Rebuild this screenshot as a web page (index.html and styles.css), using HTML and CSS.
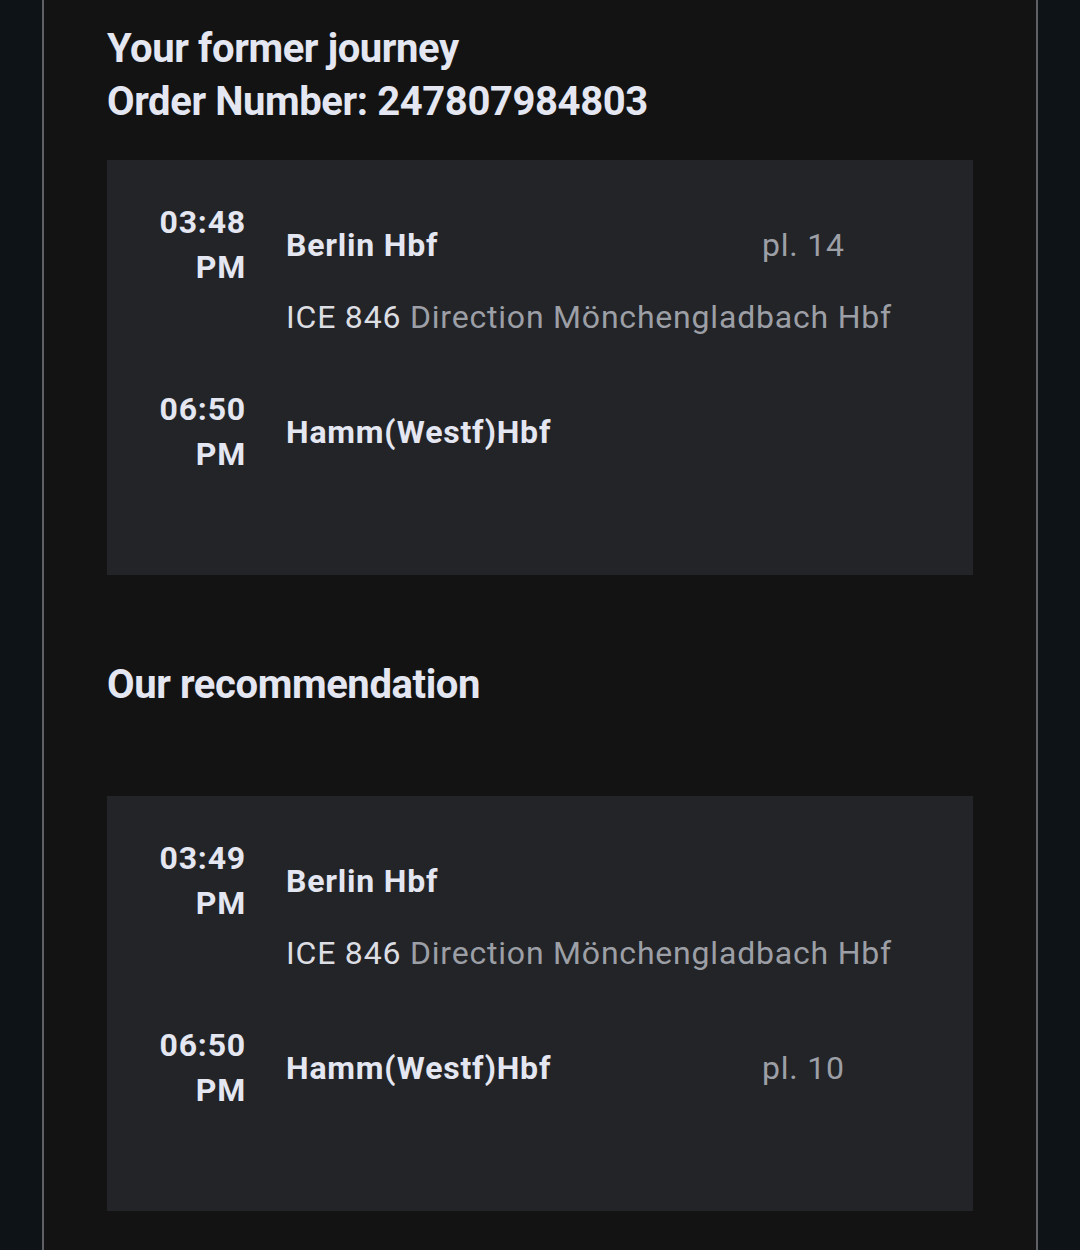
FILE: index.html
```html
<!DOCTYPE html>
<html lang="en">

<head>
    <meta charset="UTF-8">
    <meta name="viewport" content="width=device-width, initial-scale=1.0">
    <title>Journey</title>
    <link rel="stylesheet" href="styles.css">
</head>

<body>
    <div class="panel">
        <h1 class="heading">Your former journey<br>Order Number: 247807984803</h1>

        <div class="journey">
            <div class="stop">
                <div class="time">03:48<br>PM</div>
                <div class="station">Berlin Hbf</div>
                <div class="platform">pl. 14</div>
            </div>
            <div class="train">ICE 846 <span class="direction">Direction Mönchengladbach Hbf</span></div>
            <div class="stop stop-last">
                <div class="time">06:50<br>PM</div>
                <div class="station">Hamm(Westf)Hbf</div>
                <div class="platform"></div>
            </div>
        </div>

        <h2 class="heading heading-rec">Our recommendation</h2>

        <div class="journey">
            <div class="stop">
                <div class="time">03:49<br>PM</div>
                <div class="station">Berlin Hbf</div>
                <div class="platform"></div>
            </div>
            <div class="train">ICE 846 <span class="direction">Direction Mönchengladbach Hbf</span></div>
            <div class="stop stop-last">
                <div class="time">06:50<br>PM</div>
                <div class="station">Hamm(Westf)Hbf</div>
                <div class="platform">pl. 10</div>
            </div>
        </div>
    </div>
</body>

</html>
```

FILE: styles.css
```css
body {
    margin: 0;
    font-family: Roboto, "Liberation Sans", sans-serif;
    background-color: #0e1318;
    color: #e4e7f1;
}

.panel {
    margin: 0 42px;
    min-height: 1250px;
    padding: 22px 63px 40px;
    background-color: #131313;
    border-left: 2px solid #5e6064;
    border-right: 2px solid #5e6064;
    box-sizing: border-box;
}

.heading {
    margin: 0;
    font-size: 40px;
    font-weight: 700;
    line-height: 53px;
    letter-spacing: -0.4px;
}

.heading-rec {
    margin: 83px 0 85px;
}

.journey {
    margin-top: 32px;
    padding: 40px 0 98px 52px;
    background-color: #232427;
    font-size: 32px;
    line-height: 45px;
    letter-spacing: 0.8px;
}

.stop {
    display: grid;
    grid-template-columns: 87px 436px auto;
    column-gap: 40px;
    align-items: center;
}

.stop-last {
    margin-top: 47px;
}

.time {
    text-align: right;
    font-weight: 700;
}

.station {
    font-weight: 700;
}

.platform {
    color: #9c9fa6;
}

.train {
    margin: 5px 0 0 127px;
    color: #dcdee4;
    white-space: nowrap;
}

.direction {
    color: #9c9fa6;
}
```
